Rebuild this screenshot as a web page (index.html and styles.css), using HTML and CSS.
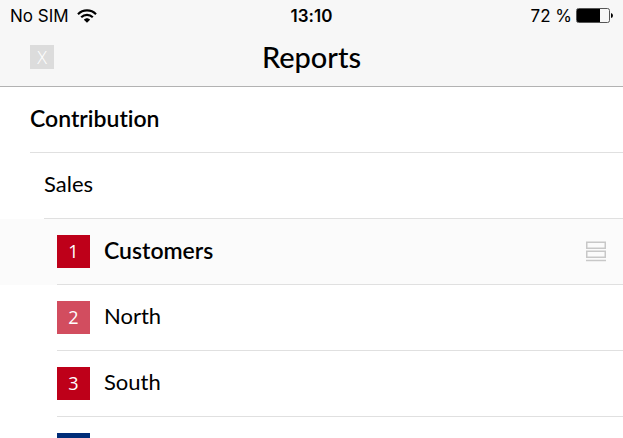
FILE: index.html
```html
<!DOCTYPE html>
<html lang="en">
<head>
  <meta charset="UTF-8">
  <meta name="viewport" content="width=device-width, initial-scale=1">
  <title>Reports</title>
  <link rel="stylesheet" href="styles.css">
</head>
<body>
  <header class="header">
    <div class="status-bar">
      <div class="carrier">
        <span>No SIM</span>
        <svg class="wifi" width="20" height="14" viewBox="0 0 20 14" fill="none" stroke="#000" stroke-width="2.2">
          <path d="M1 5.2C6 .1 14 .1 19 5.2"/>
          <path d="M4.200 8.300C7.500 5 12.500 5 15.800 8.300"/>
          <path d="M6.900 10.700C8.500 8.700 11.500 8.700 13.100 10.700L10 13.700Z" fill="#000" stroke="none"/>
        </svg>
      </div>
      <div class="time">13:10</div>
      <div class="battery">
        <span>72 %</span>
        <svg width="37" height="16" viewBox="0 0 37 16">
          <rect x=".5" y=".5" width="33" height="14" rx="2" fill="#f7f7f7" stroke="#555"/>
          <path d="M2 1H24V14H2Q1 14 1 13V2Q1 1 2 1Z" fill="#000"/>
          <path d="M35 5Q37 5.500 37 7.500T35 10Z" fill="#000"/>
        </svg>
      </div>
    </div>
    <div class="title-bar">
      <button class="close" type="button" aria-label="Close">X</button>
      <h1>Reports</h1>
    </div>
  </header>

  <main>
    <ul class="list">
      <li class="item level-1">
        <a class="row bold" href="#contribution"><span class="name">Contribution</span></a>
      </li>
      <li class="item level-2">
        <a class="row" href="#sales"><span class="name">Sales</span></a>
      </li>
      <li class="item level-3 active">
        <a class="row bold" href="#customers">
          <span class="badge red">1</span>
          <span class="name">Customers</span>
          <svg class="layout-icon" width="20" height="21" viewBox="0 0 20 21" fill="none" stroke="#c8c8c8">
            <rect x=".75" y="1.250" width="18.500" height="6" stroke-width="1.500"/>
            <rect x=".75" y="10.250" width="18.500" height="6" stroke-width="1.500"/>
            <path d="M0 19.500H20" stroke-width="1.500"/>
          </svg>
        </a>
      </li>
      <li class="item level-3">
        <a class="row" href="#north">
          <span class="badge pink">2</span>
          <span class="name">North</span>
        </a>
      </li>
      <li class="item level-3">
        <a class="row" href="#south">
          <span class="badge red">3</span>
          <span class="name">South</span>
        </a>
      </li>
      <li class="item level-3">
        <a class="row" href="#next" aria-label="Next report">
          <span class="badge blue"></span>
        </a>
      </li>
    </ul>
  </main>
</body>
</html>
```
FILE: styles.css
```css
* {
  box-sizing: border-box;
}

body {
  margin: 0;
  height: 100vh;
  overflow: hidden;
  font-family: Lato, sans-serif;
  font-variant-ligatures: none;
  background-color: #fff;
  color: #000;
}

.header {
  background-color: #f7f7f7;
  border-bottom: 1px solid #b2b2b2;
}

.status-bar {
  display: grid;
  grid-template-columns: 1fr auto 1fr;
  align-items: center;
  height: 32px;
  padding: 0 10px;
  font-family: Inter, sans-serif;
  font-size: 17px;
}

.carrier {
  display: flex;
  align-items: center;
  gap: 8px;
}

.time {
  font-weight: 600;
}

.battery {
  display: flex;
  align-items: center;
  justify-content: flex-end;
  gap: 4px;
}

.title-bar {
  display: grid;
  grid-template-columns: 1fr auto 1fr;
  align-items: center;
  height: 54px;
  padding: 0 30px 4px;
}

.title-bar h1 {
  margin: 0;
  font-size: 29px;
  font-weight: 500;
  line-height: 32px;
}

.close {
  width: 24px;
  height: 24px;
  padding: 0;
  border: none;
  background-color: #dcdcdc;
  color: #fff;
  font-family: "Open Sans", sans-serif;
  font-size: 18px;
  font-weight: 300;
  line-height: 24px;
  cursor: pointer;
}

.list {
  margin: 0;
  padding: 0;
  list-style: none;
}

.level-1 {
  padding-left: 30px;
}

.level-2 {
  padding-left: 44px;
}

.level-3 {
  padding-left: 57px;
}

.active {
  background-color: #fbfbfb;
}

.row {
  display: flex;
  align-items: center;
  gap: 14px;
  height: 66px;
  padding-right: 17px;
  border-bottom: 1px solid #e0e0e0;
  color: #000;
  font-size: 22px;
  text-decoration: none;
}

.name {
  padding-bottom: 4px;
}

.bold {
  font-size: 23px;
  font-weight: 600;
}

.badge {
  width: 33px;
  height: 33px;
  color: #fff;
  font-family: "Open Sans", sans-serif;
  font-size: 18px;
  font-weight: 400;
  line-height: 33px;
  text-align: center;
}

.red {
  background-color: #be0019;
}

.pink {
  background-color: #d24d5f;
}

.blue {
  background-color: #002d78;
}

.layout-icon {
  margin-left: auto;
}
```
